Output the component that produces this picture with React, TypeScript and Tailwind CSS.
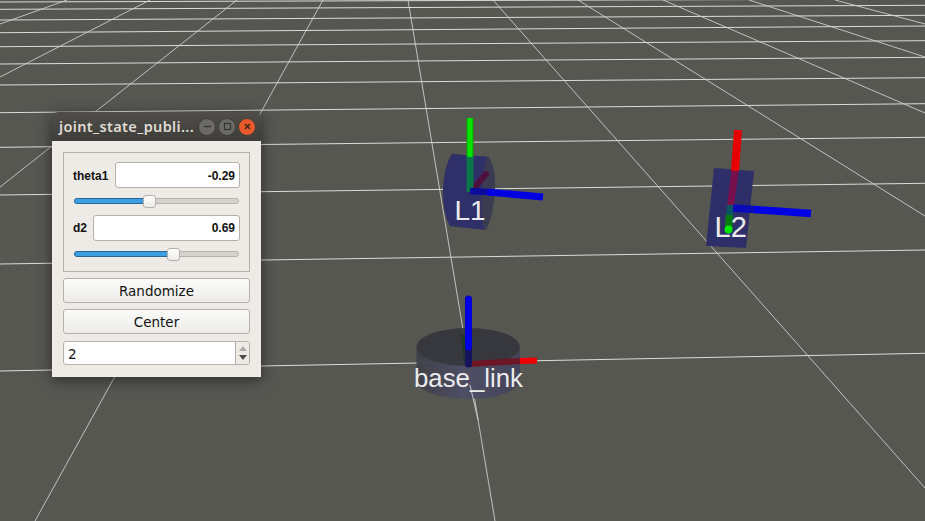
import React from "react";

const gridLines: [number, number, number, number][] = [
  [0, 2, 925, -1],
  [0, 9.3, 925, 5.3],
  [0, 20, 925, 15.3],
  [0, 32.7, 925, 26],
  [0, 46.7, 925, 40.7],
  [0, 64, 925, 57.3],
  [0, 85, 925, 77.7],
  [0, 112.7, 925, 103.7],
  [0, 147.3, 925, 137.3],
  [0, 195, 925, 183.3],
  [0, 264, 925, 250],
  [0, 371, 925, 353.3],
  [35, 521, 323, 0],
  [0, 187, 237, 0],
  [0, 77, 150, 0],
  [0, 24, 67, 0],
  [408, 0, 495, 521],
  [493, 0, 925, 488],
  [578, 0, 925, 216],
  [663, 0, 925, 113],
  [749, 0, 925, 57],
  [835, 0, 925, 24],
];

function Scene() {
  return (
    <svg className="absolute inset-0" width={925} height={521} viewBox="0 0 925 521">
      <defs>
        <linearGradient id="side" x1="0" x2="1" y1="0" y2="0">
          <stop offset="0" stopColor="#3e3f47" />
          <stop offset="0.45" stopColor="#4e4e66" />
          <stop offset="1" stopColor="#44455a" />
        </linearGradient>
      </defs>
      {gridLines.map(([a, b, c, d], i) => (
        <line
          key={i}
          x1={a}
          y1={b}
          x2={c}
          y2={d}
          stroke={i < 12 ? "#dcdcd8" : "#d4d4d0"}
          strokeWidth={i < 12 ? 1 : 0.85}
        />
      ))}

      {/* base_link */}
      <g opacity={0.95}>
        <path d="M416.5 348 L416.5 380 A51.7 19 0 0 0 520 380 L520 348 Z" fill="url(#side)" />
        <ellipse cx={468.2} cy={347} rx={51.7} ry={19} fill="#36363e" />
      </g>
      <line x1={463} y1={335} x2={466} y2={362} stroke="#1f3a28" strokeWidth={4} />
      <line x1={470} y1={364} x2={520} y2={361} stroke="#6d1626" strokeWidth={6} />
      <line x1={520} y1={361} x2={537} y2={360.5} stroke="#f00000" strokeWidth={6} />
      <line x1={468.5} y1={346} x2={468.5} y2={364} stroke="#15155f" strokeWidth={7} strokeLinecap="round" />
      <line x1={468.5} y1={299} x2={468.5} y2={347} stroke="#0000c8" strokeWidth={7} strokeLinecap="round" />
      <line x1={468.5} y1={299} x2={468.5} y2={347} stroke="#0000e8" strokeWidth={5} strokeLinecap="round" />
      <line x1={470} y1={385} x2={478} y2={420} stroke="#d4d4d0" strokeWidth={0.85} />

      {/* L1 */}
      <path d="M452 154 Q444 166 443 190 Q443 214 450 226 L486 230 Q493 218 495 190 Q496 168 489 157 Z" fill="#3b3c52" />
      <path d="M452 154 Q444 166 443 190 Q443 214 450 226 L484 229.7 Q480 210 482 190 Q483 170 487 156.8 Z" fill="#2f3069" />
      <line x1={474} y1={188} x2={486} y2={174} stroke="#4f1040" strokeWidth={6} strokeLinecap="round" />
      <line x1={470} y1={118} x2={470} y2={157} stroke="#00a000" strokeWidth={7} />
      <line x1={470} y1={118} x2={470} y2={157} stroke="#00e400" strokeWidth={5} />
      <line x1={470} y1={157} x2={470} y2={192} stroke="#0b7548" strokeWidth={7} />
      <line x1={470} y1={191} x2={487} y2={192} stroke="#0c0c9c" strokeWidth={6.5} />
      <line x1={487} y1={192} x2={543} y2={197} stroke="#0000e0" strokeWidth={7} />

      {/* L2 */}
      <path d="M714 168 L754 171 L746 248 L706 246 Z" fill="#2e2f69" />
      <line x1={738} y1={130} x2={735} y2={171} stroke="#e80000" strokeWidth={8} />
      <line x1={735} y1={171} x2={730.5} y2={206} stroke="#78104e" strokeWidth={7} />
      <line x1={730.5} y1={205} x2={729.5} y2={216} stroke="#0b5460" strokeWidth={7} />
      <line x1={729.5} y1={215} x2={728.5} y2={230} stroke="#087a10" strokeWidth={7.5} />
      <line x1={733} y1={208} x2={754} y2={209.5} stroke="#0a0ab8" strokeWidth={7.5} />
      <line x1={754} y1={209.5} x2={811} y2={213.5} stroke="#0000e4" strokeWidth={7.5} />
      <circle cx={728.5} cy={229.5} r={4} fill="#00e800" />

      <g fontFamily='"Liberation Sans", Arial, sans-serif' fill="#ececec">
        <text x={454.5} y={220} fontSize={28}>L1</text>
        <text x={714.5} y={237} fontSize={29}>L2</text>
        <text x={414} y={387} fontSize={25.8}>base_link</text>
      </g>
    </svg>
  );
}

function Slider({ thumbLeft }: { thumbLeft: number }) {
  return (
    <div className="relative h-[13px] ml-px mr-px">
      <div className="absolute left-0 right-0 top-[3px] h-[6px] rounded-[3px] border border-[#b7b3ac] bg-[#d6d3ce]" />
      <div
        className="absolute left-0 top-[3px] h-[6px] rounded-l-[3px] border border-[#25689e] bg-[#3d9fe0]"
        style={{ width: thumbLeft + 2 }}
      />
      <div
        className="absolute top-0 h-[13px] w-[13px] rounded-[3px] border border-[#b5b1aa] bg-gradient-to-b from-[#ffffff] to-[#ecebe8]"
        style={{ left: thumbLeft }}
      />
    </div>
  );
}

function Field({ value, className }: { value: string; className: string }) {
  return (
    <div
      className={
        "h-[26px] rounded-[3px] border border-[#b5b1aa] bg-white flex items-center justify-end pr-[4px] font-['Liberation_Sans'] font-bold text-[12px] text-[#111111] " +
        className
      }
    >
      {value}
    </div>
  );
}

function PushButton({ label }: { label: string }) {
  return (
    <button className="block h-[25px] w-full pt-[2px] rounded-[3px] border border-[#b5b1aa] bg-gradient-to-b from-[#fbfbfa] to-[#ecebe8] text-[13.5px] leading-none text-[#111111] font-['DejaVu_Sans']">
      {label}
    </button>
  );
}

function TitleDot({ color, children }: { color: string; children: React.ReactNode }) {
  return (
    <div className={"h-[18px] w-[18px] rounded-full flex items-center justify-center border border-[#3f3e3a] " + color}>
      <svg width={11} height={11} viewBox="0 0 11 11" fill="none">
        {children}
      </svg>
    </div>
  );
}

function JointWindow() {
  return (
    <div className="absolute left-[52px] top-[112px] w-[209px] h-[265px] flex flex-col shadow-[0_3px_14px_rgba(0,0,0,0.5)] rounded-t-[6px]">
      <div className="h-[29px] shrink-0 rounded-t-[6px] bg-gradient-to-b from-[#504e49] to-[#3e3d39] flex items-center pl-[7px] pr-[5px]">
        <span className="flex-1 whitespace-nowrap font-['Noto_Sans'] font-semibold text-[14.5px] tracking-[0.35px] text-[#dfdbd2]">
          joint_state_publi...
        </span>
        <div className="flex items-center gap-[2px]">
          <TitleDot color="bg-[#6b6a65]">
            <path d="M2 5.5H9" stroke="#33322f" strokeWidth={1.3} />
          </TitleDot>
          <TitleDot color="bg-[#6b6a65]">
            <rect x={2.5} y={2.5} width={6} height={6} stroke="#33322f" strokeWidth={1.2} />
          </TitleDot>
          <TitleDot color="bg-[#e8592b]">
            <path d="M3 3L8 8M8 3L3 8" stroke="#3a2418" strokeWidth={1.4} />
          </TitleDot>
        </div>
      </div>
      <div className="flex-1 bg-[#eeebe7] px-[11px] pt-[11px] flex flex-col">
        <div className="h-[120px] border border-[#b5b1aa] pl-[9px] pr-[9px] pt-[9px] flex flex-col">
          <div className="flex items-center">
            <span className="w-[42px] shrink-0 pt-[2px] font-['Liberation_Sans'] font-bold text-[12px] text-[#111111]">theta1</span>
            <Field value="-0.29" className="flex-1 pt-[2px]" />
          </div>
          <div className="mt-[7px]">
            <Slider thumbLeft={69} />
          </div>
          <div className="flex items-center mt-[7px]">
            <span className="w-[20px] shrink-0 font-['Liberation_Sans'] font-bold text-[12px] text-[#111111]">d2</span>
            <Field value="0.69" className="flex-1" />
          </div>
          <div className="mt-[7px]">
            <Slider thumbLeft={93} />
          </div>
        </div>
        <div className="mt-[6px]">
          <PushButton label="Randomize" />
        </div>
        <div className="mt-[6px]">
          <PushButton label="Center" />
        </div>
        <div className="mt-[7px] h-[24px] rounded-[3px] border border-[#b5b1aa] bg-white flex items-stretch">
          <div className="flex-1 flex items-center pl-[4px] pt-[2px] text-[13.5px] text-[#111111] font-['DejaVu_Sans']">2</div>
          <div className="w-[14px] border-l border-[#b5b1aa] bg-[#eeebe7] rounded-r-[3px] flex flex-col items-center justify-center gap-[4px]">
            <svg width={8} height={5} viewBox="0 0 8 5">
              <path d="M0 5L4 0L8 5Z" fill="#aeaca7" />
            </svg>
            <svg width={8} height={5} viewBox="0 0 8 5">
              <path d="M0 0L8 0L4 5Z" fill="#4c4b48" />
            </svg>
          </div>
        </div>
      </div>
    </div>
  );
}

export default function App() {
  return (
    <div className="relative w-[925px] h-[521px] overflow-hidden bg-[#565751]">
      <Scene />
      <JointWindow />
    </div>
  );
}
